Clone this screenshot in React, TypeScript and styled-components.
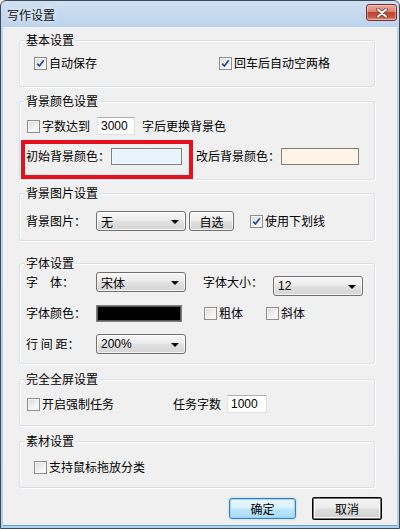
import React from "react";
import styled, { createGlobalStyle, css } from "styled-components";

const Global = createGlobalStyle`
  html, body { margin: 0; padding: 0; background: #fff; }
  body { font-family: "Noto Sans CJK SC", "Noto Sans", sans-serif; font-size: 12px; color: #000; }
  * { box-sizing: border-box; }
`;

const Window = styled.div`
  width: 400px;
  height: 529px;
  border: 1px solid #3d4a58;
  border-radius: 6px 6px 0 0;
  background: linear-gradient(#cfe0f2 0px, #bcd3ec 27px, #b6cfe9 100%);
  display: flex;
  flex-direction: column;
  overflow: hidden;
`;

const TitleBar = styled.div`
  height: 26px;
  flex: none;
  display: flex;
  align-items: flex-start;
  justify-content: space-between;
  padding: 0 2px 0 6px;
`;

const TitleText = styled.span`
  font-size: 12px;
  line-height: 14px;
  margin-top: 7px;
  color: #111;
  text-shadow: 0 0 6px rgba(255, 255, 255, 0.9);
`;

const CloseBtn = styled.div`
  width: 31px;
  height: 17px;
  margin-top: 3px;
  border: 1px solid #7a2f28;
  border-radius: 3px;
  background: linear-gradient(#e8aa9e 0%, #d88474 45%, #c0442e 50%, #c8553f 80%, #e19a82 100%);
  box-shadow: inset 0 0 0 1px rgba(255, 255, 255, 0.35);
  display: flex;
  align-items: center;
  justify-content: center;
`;

const Client = styled.div`
  flex: 1;
  margin: 0 2px 2px 2px;
  background: #f0f0f0;
  padding: 13px 22px 0 16px;
  display: flex;
  flex-direction: column;
  border-bottom: 1px solid #55a6d8;
`;

const Group = styled.div<{ $h: number; $mt?: number; $pt: number }>`
  position: relative;
  height: ${(p) => p.$h}px;
  margin-top: ${(p) => p.$mt ?? 0}px;
  padding-top: ${(p) => p.$pt}px;
  border: 1px solid #d5dfe5;
  border-radius: 3px;
  box-shadow: inset 1px 1px 0 #fff, 1px 1px 0 #fff;
  display: flex;
  flex-direction: column;
  flex: none;
`;

const GroupTitle = styled.span`
  position: absolute;
  top: -8px;
  left: 5px;
  padding: 0 1px;
  background: #f0f0f0;
  line-height: 14px;
  font-size: 12px;
`;

const Row = styled.div<{ $pl?: number; $mt?: number }>`
  display: flex;
  align-items: center;
  height: 20px;
  padding-left: ${(p) => p.$pl ?? 6}px;
  margin-top: ${(p) => p.$mt ?? 0}px;
  white-space: nowrap;
`;

const Label = styled.span<{ $w?: number; $ml?: number }>`
  display: inline-block;
  flex: none;
  ${(p) => p.$w !== undefined && css`width: ${p.$w}px;`}
  margin-left: ${(p) => p.$ml ?? 0}px;
  line-height: 16px;
`;

const CheckWrap = styled.label<{ $w?: number; $ml?: number }>`
  display: inline-flex;
  align-items: center;
  gap: 2px;
  flex: none;
  ${(p) => p.$w !== undefined && css`width: ${p.$w}px;`}
  margin-left: ${(p) => p.$ml ?? 0}px;
  line-height: 16px;
`;

const Box = styled.span`
  width: 13px;
  height: 13px;
  flex: none;
  border: 1px solid #8e8f8f;
  background: linear-gradient(135deg, #d9d9d9 0%, #f3f3f3 60%, #ffffff 100%);
  box-shadow: inset 0 0 0 1px #f4f4f4;
  display: flex;
  align-items: center;
  justify-content: center;
`;

const Check: React.FC<{ checked?: boolean }> = ({ checked }) => (
  <Box>
    {checked && (
      <svg width="9" height="9" viewBox="0 0 9 9">
        <path d="M1.2 4.6 L3.4 7 L7.8 1.2" fill="none" stroke="#2c4a9a" strokeWidth="1.8" strokeLinejoin="round" />
      </svg>
    )}
  </Box>
);

const CheckItem: React.FC<{ checked?: boolean; text: string; w?: number; ml?: number }> = ({ checked, text, w, ml }) => (
  <CheckWrap $w={w} $ml={ml}>
    <Check checked={checked} />
    <span>{text}</span>
  </CheckWrap>
);

const TextInput = styled.div<{ $w: number; $ml?: number }>`
  width: ${(p) => p.$w}px;
  height: 18px;
  flex: none;
  margin-left: ${(p) => p.$ml ?? 0}px;
  background: #fff;
  border: 1px solid #dbdfe6;
  border-top-color: #abadb3;
  border-left-color: #e2e3ea;
  font-family: "Liberation Sans", Arial, sans-serif;
  font-size: 12px;
  line-height: 16px;
  padding-left: 3px;
`;

const Swatch = styled.div<{ $w: number; $bg: string; $ml?: number }>`
  width: ${(p) => p.$w}px;
  height: 17px;
  flex: none;
  margin-left: ${(p) => p.$ml ?? 0}px;
  background: ${(p) => p.$bg};
  border: 1px solid #7f7f7f;
  box-shadow: inset 0 0 0 1px rgba(255, 255, 255, 0.35);
`;

const SelectBox = styled.div<{ $w: number; $ml?: number; $mt?: number }>`
  width: ${(p) => p.$w}px;
  height: 20px;
  flex: none;
  margin-left: ${(p) => p.$ml ?? 0}px;
  margin-top: ${(p) => p.$mt ?? 0}px;
  border: 1px solid #707070;
  border-radius: 3px;
  background: linear-gradient(#f6f6f6 0%, #ececec 45%, #dfdfdf 55%, #d6d6d6 100%);
  box-shadow: inset 0 0 0 1px rgba(255, 255, 255, 0.75);
  display: flex;
  align-items: center;
  justify-content: space-between;
  padding: 0 6px 0 4px;
  font-family: "Liberation Sans", "Noto Sans CJK SC", sans-serif;
  font-size: 12px;
`;

const Arrow = styled.span`
  width: 0;
  height: 0;
  border-left: 4px solid transparent;
  border-right: 4px solid transparent;
  border-top: 4px solid #000;
  margin-top: 1px;
`;

const Select: React.FC<{ value: string; w: number; ml?: number; mt?: number }> = ({ value, w, ml, mt }) => (
  <SelectBox $w={w} $ml={ml} $mt={mt}>
    <span>{value}</span>
    <Arrow />
  </SelectBox>
);

const Button = styled.div<{ $w: number; $h?: number; $ml?: number; $variant?: "normal" | "focus" | "default" }>`
  width: ${(p) => p.$w}px;
  height: ${(p) => p.$h ?? 20}px;
  flex: none;
  margin-left: ${(p) => p.$ml ?? 0}px;
  border-radius: 3px;
  display: flex;
  align-items: center;
  justify-content: center;
  font-size: 12px;
  ${(p) =>
    p.$variant === "focus"
      ? css`
          border: 1px solid #3c7fb1;
          background: linear-gradient(#eaf6fd 0%, #d9f0fc 48%, #bee6fd 52%, #a7d9f5 100%);
          box-shadow: inset 0 0 0 1px #9cd5f3, 0 0 2px #7ec4ee;
        `
      : p.$variant === "default"
      ? css`
          border: 1px solid #000;
          border-radius: 2px;
          background: linear-gradient(#f4f4f4 0%, #ececec 45%, #dedede 55%, #d0d0d0 100%);
          box-shadow: inset 0 0 0 1px #707070, inset 0 0 0 2px #fafafa;
        `
      : css`
          border: 1px solid #707070;
          background: linear-gradient(#f6f6f6 0%, #ececec 45%, #dfdfdf 55%, #d3d3d3 100%);
          box-shadow: inset 0 0 0 1px rgba(255, 255, 255, 0.75);
        `}
`;

const Annotation = styled.div`
  position: absolute;
  left: 1px;
  top: 38px;
  width: 172px;
  height: 39px;
  border: 4px solid #e8101c;
  pointer-events: none;
`;

const ButtonRow = styled.div`
  display: flex;
  justify-content: flex-end;
  margin-top: 9px;
  margin-right: -7px;
  gap: 16px;
  align-items: center;
`;

export default function App() {
  return (
    <>
      <Global />
      <Window>
        <TitleBar>
          <TitleText>写作设置</TitleText>
          <CloseBtn>
            <svg width="12" height="10" viewBox="0 0 12 10">
              <path d="M2 1.5 L10 8.5 M10 1.5 L2 8.5" stroke="#6a2a22" strokeWidth="3.6" strokeLinecap="round" />
              <path d="M2 1.5 L10 8.5 M10 1.5 L2 8.5" stroke="#fff" strokeWidth="2.2" strokeLinecap="round" />
            </svg>
          </CloseBtn>
        </TitleBar>
        <Client>
          <Group $h={47} $pt={12}>
            <GroupTitle>基本设置</GroupTitle>
            <Row $pl={14}>
              <CheckItem checked text="自动保存" w={185} />
              <CheckItem checked text="回车后自动空两格" />
            </Row>
          </Group>

          <Group $h={79} $mt={14} $pt={14}>
            <GroupTitle>背景颜色设置</GroupTitle>
            <Row $pl={7}>
              <CheckItem text="字数达到" w={70} />
              <TextInput $w={38}>3000</TextInput>
              <Label $ml={7}>字后更换背景色</Label>
            </Row>
            <Row $mt={10}>
              <Label $w={85}>初始背景颜色：</Label>
              <Swatch $w={71} $bg="#e8f3fc" />
              <Label $w={85} $ml={14}>改后背景颜色：</Label>
              <Swatch $w={78} $bg="#fff3e5" />
            </Row>
            <Annotation />
          </Group>

          <Group $h={48} $mt={13} $pt={17}>
            <GroupTitle>背景图片设置</GroupTitle>
            <Row>
              <Label $w={70}>背景图片：</Label>
              <Select value="无" w={90} />
              <Button $w={45} $ml={3}>自选</Button>
              <CheckItem checked text="使用下划线" ml={16} />
            </Row>
          </Group>

          <Group $h={101} $mt={22} $pt={8}>
            <GroupTitle>字体设置</GroupTitle>
            <Row>
              <Label $w={70}>字　体：</Label>
              <Select value="宋体" w={90} />
              <Label $w={70} $ml={17}>字体大小：</Label>
              <Select value="12" w={90} mt={8} />
            </Row>
            <Row $mt={11}>
              <Label $w={70}>字体颜色：</Label>
              <Swatch $w={86} $bg="#000000" />
              <CheckItem text="粗体" w={62} ml={22} />
              <CheckItem text="斜体" />
            </Row>
            <Row $mt={11}>
              <Label $w={70}>行 间 距：</Label>
              <Select value="200%" w={90} />
            </Row>
          </Group>

          <Group $h={47} $mt={15} $pt={14}>
            <GroupTitle>完全全屏设置</GroupTitle>
            <Row $pl={7}>
              <CheckItem text="开启强制任务" w={146} />
              <Label>任务字数</Label>
              <TextInput $w={40} $ml={6}>1000</TextInput>
            </Row>
          </Group>

          <Group $h={47} $mt={15} $pt={15}>
            <GroupTitle>素材设置</GroupTitle>
            <Row $pl={14}>
              <CheckItem text="支持鼠标拖放分类" />
            </Row>
          </Group>

          <ButtonRow>
            <Button $w={67} $h={21} $variant="focus">确定</Button>
            <Button $w={70} $h={23} $variant="default">取消</Button>
          </ButtonRow>
        </Client>
      </Window>
    </>
  );
}
